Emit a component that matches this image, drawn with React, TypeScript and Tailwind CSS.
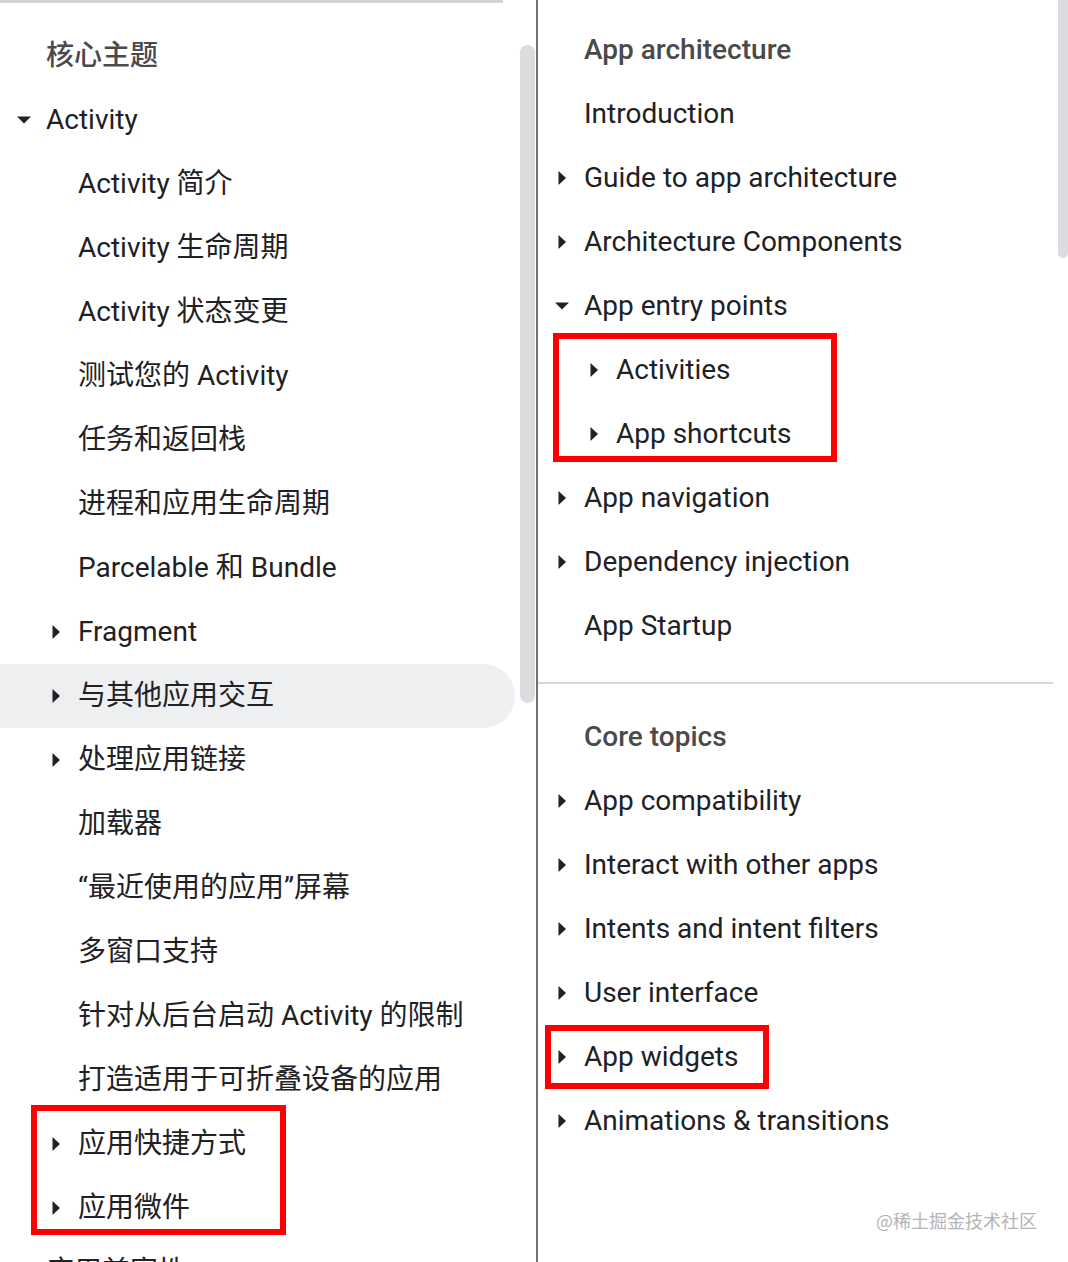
import React from "react";

type Item = { label: string; level: 0 | 1; arrow?: "right" | "down"; active?: boolean };

const font = { fontFamily: 'Roboto, "Noto Sans CJK SC", sans-serif' };

const leftItems: Item[] = [
  { label: "Activity", level: 0, arrow: "down" },
  { label: "Activity 简介", level: 1 },
  { label: "Activity 生命周期", level: 1 },
  { label: "Activity 状态变更", level: 1 },
  { label: "测试您的 Activity", level: 1 },
  { label: "任务和返回栈", level: 1 },
  { label: "进程和应用生命周期", level: 1 },
  { label: "Parcelable 和 Bundle", level: 1 },
  { label: "Fragment", level: 1, arrow: "right" },
  { label: "与其他应用交互", level: 1, arrow: "right", active: true },
  { label: "处理应用链接", level: 1, arrow: "right" },
  { label: "加载器", level: 1 },
  { label: "“最近使用的应用”屏幕", level: 1 },
  { label: "多窗口支持", level: 1 },
  { label: "针对从后台启动 Activity 的限制", level: 1 },
  { label: "打造适用于可折叠设备的应用", level: 1 },
  { label: "应用快捷方式", level: 1, arrow: "right" },
  { label: "应用微件", level: 1, arrow: "right" },
  { label: "应用兼容性", level: 0 },
];

const archItems: Item[] = [
  { label: "Introduction", level: 0 },
  { label: "Guide to app architecture", level: 0, arrow: "right" },
  { label: "Architecture Components", level: 0, arrow: "right" },
  { label: "App entry points", level: 0, arrow: "down" },
  { label: "Activities", level: 1, arrow: "right" },
  { label: "App shortcuts", level: 1, arrow: "right" },
  { label: "App navigation", level: 0, arrow: "right" },
  { label: "Dependency injection", level: 0, arrow: "right" },
  { label: "App Startup", level: 0 },
];

const coreItems: Item[] = [
  { label: "App compatibility", level: 0, arrow: "right" },
  { label: "Interact with other apps", level: 0, arrow: "right" },
  { label: "Intents and intent filters", level: 0, arrow: "right" },
  { label: "User interface", level: 0, arrow: "right" },
  { label: "App widgets", level: 0, arrow: "right" },
  { label: "Animations & transitions", level: 0, arrow: "right" },
];

function Arrow({ dir }: { dir?: "right" | "down" }) {
  return (
    <span className="flex w-[46px] shrink-0 items-center pl-[17px]">
      {dir && (
        <svg width="14" height="14" viewBox="0 0 14 14" aria-hidden="true">
          {dir === "down" ? (
            <polygon points="0,3.5 14,3.5 7,10.5" fill="#202124" />
          ) : (
            <polygon points="3.5,0 11,7 3.5,14" fill="#202124" />
          )}
        </svg>
      )}
    </span>
  );
}

function NavRow({ label, level, arrow, active }: Item) {
  return (
    <div
      className={`flex h-16 items-center text-[28px] text-[#202124] ${level === 1 ? "pl-8" : ""} ${
        active ? "w-[515px] rounded-r-[32px] bg-[#eeeff1]" : ""
      }`}
    >
      <Arrow dir={arrow} />
      <span className="whitespace-nowrap">{label}</span>
    </div>
  );
}

function Heading({ children }: { children: React.ReactNode }) {
  return (
    <div className="flex h-16 items-center text-[28px] font-medium text-[#4a4a4a]">
      <span className="w-[46px] shrink-0" />
      <span className="whitespace-nowrap">{children}</span>
    </div>
  );
}

export default function App() {
  return (
    <div className="relative flex h-[1262px] w-[1068px] overflow-hidden bg-white" style={font}>
      {/* left nav (zh) */}
      <div className="relative w-[536px] shrink-0">
        <div className="h-[3px] w-[503px] bg-[#d4d4d4]" />
        <div className="pt-[21px]">
          <Heading>核心主题</Heading>
          {leftItems.map((it) => (
            <NavRow key={it.label} {...it} />
          ))}
        </div>
        <div className="absolute left-[520px] top-[45px] h-[658px] w-[15px] rounded-full bg-[#dadce0]" />
      </div>

      <div className="w-[2px] shrink-0 bg-[#707070]" />

      {/* right nav (en) */}
      <div className="relative flex-1">
        <div className="pt-[18px]">
          <Heading>App architecture</Heading>
          {archItems.map((it) => (
            <NavRow key={it.label} {...it} />
          ))}
        </div>
        <div className="mr-[15px] mt-[24px] h-[2px] bg-[#d6d6d6]" />
        <div className="pt-[21px]">
          <Heading>Core topics</Heading>
          {coreItems.map((it) => (
            <NavRow key={it.label} {...it} />
          ))}
        </div>
        <div className="absolute right-0 top-0 h-[258px] w-[10px] rounded-b-full bg-[#dadce0]" />
      </div>

      {/* annotations */}
      <div className="absolute left-[553px] top-[333px] h-[129px] w-[284px] border-[6px] border-[#ff0000]" />
      <div className="absolute left-[31px] top-[1105px] h-[130px] w-[255px] border-[6px] border-[#ff0000]" />
      <div className="absolute left-[545px] top-[1025px] h-[64px] w-[224px] border-[6px] border-[#ff0000]" />

      <div className="absolute left-[876px] top-[1207px] text-[18px] text-[#b4b4b4]" style={{ fontFamily: '"Noto Sans CJK SC", sans-serif' }}>
        @稀土掘金技术社区
      </div>
    </div>
  );
}
